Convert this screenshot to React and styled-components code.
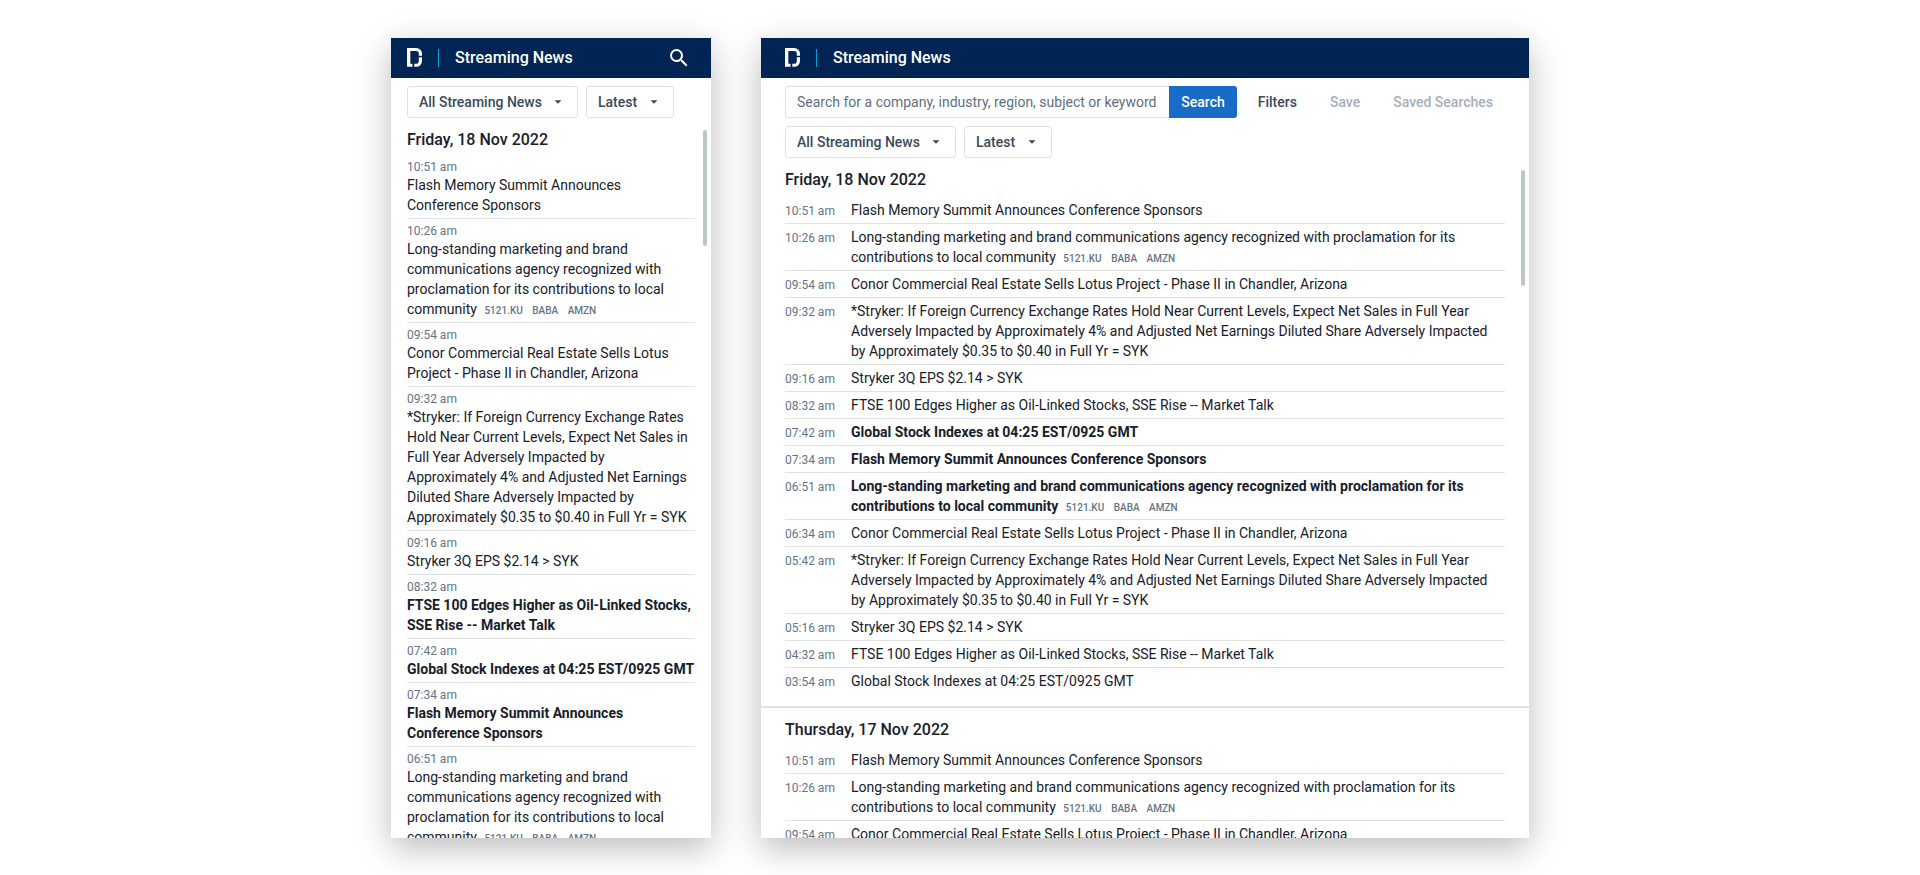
import React from "react";
import styled, { createGlobalStyle, css } from "styled-components";
import { MdSearch } from "react-icons/md";

const TICKERS = ["5121.KU", "BABA", "AMZN"];

const FLASH = "Flash Memory Summit Announces Conference Sponsors";
const AGENCY =
  "Long-standing marketing and brand communications agency recognized with proclamation for its contributions to local community";
const CONOR =
  "Conor Commercial Real Estate Sells Lotus Project - Phase II in Chandler, Arizona";
const STRYKER =
  "*Stryker: If Foreign Currency Exchange Rates Hold Near Current Levels, Expect Net Sales in Full Year Adversely Impacted by Approximately 4% and Adjusted Net Earnings Diluted Share Adversely Impacted by Approximately $0.35 to $0.40 in Full Yr = SYK";
const EPS = "Stryker 3Q EPS $2.14 > SYK";
const FTSE = "FTSE 100 Edges Higher as Oil-Linked Stocks, SSE Rise -- Market Talk";
const GLOBAL = "Global Stock Indexes at 04:25 EST/0925 GMT";

const mobileDays = [
  {
    date: "Friday, 18 Nov 2022",
    items: [
      { time: "10:51 am", title: FLASH },
      { time: "10:26 am", title: AGENCY, tickers: TICKERS },
      { time: "09:54 am", title: CONOR },
      { time: "09:32 am", title: STRYKER },
      { time: "09:16 am", title: EPS },
      { time: "08:32 am", title: FTSE, unread: true },
      { time: "07:42 am", title: GLOBAL, unread: true },
      { time: "07:34 am", title: FLASH, unread: true },
      { time: "06:51 am", title: AGENCY, tickers: TICKERS },
    ],
  },
];

const desktopDays = [
  {
    date: "Friday, 18 Nov 2022",
    items: [
      { time: "10:51 am", title: FLASH },
      { time: "10:26 am", title: AGENCY, tickers: TICKERS },
      { time: "09:54 am", title: CONOR },
      { time: "09:32 am", title: STRYKER },
      { time: "09:16 am", title: EPS },
      { time: "08:32 am", title: FTSE },
      { time: "07:42 am", title: GLOBAL, unread: true },
      { time: "07:34 am", title: FLASH, unread: true },
      { time: "06:51 am", title: AGENCY, tickers: TICKERS, unread: true },
      { time: "06:34 am", title: CONOR },
      { time: "05:42 am", title: STRYKER },
      { time: "05:16 am", title: EPS },
      { time: "04:32 am", title: FTSE },
      { time: "03:54 am", title: GLOBAL },
    ],
  },
  {
    date: "Thursday, 17 Nov 2022",
    items: [
      { time: "10:51 am", title: FLASH },
      { time: "10:26 am", title: AGENCY, tickers: TICKERS },
      { time: "09:54 am", title: CONOR },
    ],
  },
];

function AppHeader({ compact }) {
  return (
    <Header $compact={compact}>
      <Logo viewBox="0 0 15 19" aria-label="Home">
        <path d="M0 0H9.3A5.7 5.7 0 0 1 15 5.7V7.8H11.8V5.8A2.8 2.8 0 0 0 9 3H3.3V15.7H5.5V18.8H0Z" />
        <path d="M15 9.2V13.1A5.7 5.7 0 0 1 9.3 18.8H7.3V15.7H9A2.8 2.8 0 0 0 11.8 12.9V9.2Z" />
      </Logo>
      <HeaderLine />
      <Title>Streaming News</Title>
      {compact && (
        <IconButton type="button" aria-label="Search">
          <MdSearch size={24} />
        </IconButton>
      )}
    </Header>
  );
}

function Dropdown({ label, options }) {
  return (
    <DropdownBox>
      <Select aria-label={label}>
        {options.map((option) => (
          <option key={option}>{option}</option>
        ))}
      </Select>
      <Caret viewBox="0 0 8 4">
        <path d="M0.5 0.2H7.5L4 3.8Z" />
      </Caret>
    </DropdownBox>
  );
}

function Dropdowns() {
  return (
    <Controls $gap={8}>
      <Dropdown label="Source" options={["All Streaming News"]} />
      <Dropdown label="Sort by" options={["Latest"]} />
    </Controls>
  );
}

function Feed({ days, compact }) {
  return (
    <FeedFrame>
      <Scroller>
        {days.map((day) => (
          <Day key={day.date} $compact={compact}>
            <DayTitle $compact={compact}>{day.date}</DayTitle>
            <List>
              {day.items.map((item) => (
                <Item key={item.time} $compact={compact}>
                  <Time $compact={compact}>{item.time}</Time>
                  <Headline $unread={item.unread}>
                    {item.title}
                    {item.tickers &&
                      item.tickers.map((ticker) => (
                        <React.Fragment key={ticker}>
                          {" "}
                          <Ticker>{ticker}</Ticker>
                        </React.Fragment>
                      ))}
                  </Headline>
                </Item>
              ))}
            </List>
          </Day>
        ))}
      </Scroller>
      <Thumb />
    </FeedFrame>
  );
}

export default function App() {
  return (
    <>
      <GlobalStyle />
      <Page>
        <Panel $basis={320}>
          <AppHeader compact />
          <Toolbar $compact>
            <Dropdowns />
          </Toolbar>
          <Feed days={mobileDays} compact />
        </Panel>
        <Panel $basis={768}>
          <AppHeader />
          <Toolbar>
            <Controls $gap={9}>
              <SearchForm onSubmit={(event) => event.preventDefault()}>
                <SearchInput
                  type="text"
                  aria-label="Search news"
                  placeholder="Search for a company, industry, region, subject or keyword"
                />
                <SearchButton type="submit">Search</SearchButton>
              </SearchForm>
              <TextButton type="button">Filters</TextButton>
              <TextButton type="button" disabled>
                Save
              </TextButton>
              <TextButton type="button" disabled>
                Saved Searches
              </TextButton>
            </Controls>
            <Dropdowns />
          </Toolbar>
          <Feed days={desktopDays} />
        </Panel>
      </Page>
    </>
  );
}

const GlobalStyle = createGlobalStyle`
  * {
    box-sizing: border-box;
  }
  body {
    margin: 0;
    background-color: #fff;
    color: #17202a;
    font-family: Roboto, "Liberation Sans", sans-serif;
    font-size: 14px;
    line-height: 20px;
  }
  button, input, select {
    font: inherit;
  }
`;

const gutter = css`
  padding-left: ${(props) => (props.$compact ? 16 : 24)}px;
  padding-right: ${(props) => (props.$compact ? 16 : 24)}px;
`;

const Page = styled.main`
  height: 100vh;
  padding: 0 24px;
  display: flex;
  justify-content: center;
  align-items: center;
  gap: 50px;
`;
const Panel = styled.section`
  flex: 0 1 ${(props) => props.$basis}px;
  min-width: 0;
  height: calc(100vh - 75px);
  display: flex;
  flex-direction: column;
  background-color: #fff;
  box-shadow: 0 10px 32px rgba(0, 0, 0, 0.27);
`;
const Header = styled.header`
  ${gutter}
  flex: none;
  height: 40px;
  display: flex;
  align-items: center;
  gap: 16px;
  background-color: #002554;
  color: #fff;
`;
const Logo = styled.svg`
  width: 15px;
  height: 19px;
  fill: #fff;
`;
const HeaderLine = styled.span`
  width: 1px;
  height: 18px;
  background-color: #00a3d9;
`;
const Title = styled.h1`
  margin: 0;
  font-size: 16px;
  font-weight: 500;
`;
const IconButton = styled.button`
  margin-left: auto;
  margin-right: 4px;
  padding: 0;
  display: flex;
  border: 0;
  background: none;
  color: #fff;
`;
const Toolbar = styled.div`
  ${gutter}
  flex: none;
  padding-top: 8px;
  display: flex;
  flex-direction: column;
  gap: 8px;
`;
const Controls = styled.div`
  display: flex;
  gap: ${(props) => props.$gap}px;
`;
const DropdownBox = styled.div`
  display: grid;
  align-items: center;
`;
const Select = styled.select`
  grid-area: 1 / 1;
  height: 32px;
  padding: 0 35px 0 11px;
  appearance: none;
  border: 1px solid #dfe1e3;
  border-radius: 3px;
  background-color: #fff;
  color: #3b4a5a;
  font-weight: 500;
`;
const Caret = styled.svg`
  grid-area: 1 / 1;
  justify-self: end;
  width: 8px;
  height: 4px;
  margin-right: 16px;
  fill: #3b4a5a;
  pointer-events: none;
`;
const SearchForm = styled.form`
  flex: 1;
  min-width: 0;
  display: flex;
`;
const SearchInput = styled.input`
  flex: 1;
  min-width: 0;
  height: 32px;
  padding: 0 11px;
  border: 1px solid #dfe1e3;
  border-right: 0;
  border-radius: 3px 0 0 3px;
  color: #17202a;
  &::placeholder {
    color: #5f6f80;
    opacity: 1;
  }
`;
const SearchButton = styled.button`
  height: 32px;
  padding: 0 12px;
  border: 0;
  border-radius: 0 3px 3px 0;
  background-color: #186bc7;
  color: #fff;
  font-weight: 500;
`;
const TextButton = styled.button`
  height: 32px;
  padding: 0 12px;
  border: 0;
  background: none;
  color: #3b4a5a;
  font-weight: 500;
  white-space: nowrap;
  &:disabled {
    color: #a5afb9;
  }
`;
const FeedFrame = styled.div`
  position: relative;
  flex: 1;
  min-height: 0;
`;
const Scroller = styled.div`
  height: 100%;
  overflow-y: auto;
  scrollbar-width: none;
`;
const Thumb = styled.span`
  position: absolute;
  top: 12px;
  right: 4px;
  width: 4px;
  height: 116px;
  border-radius: 2px;
  background-color: #bdc6c8;
`;
const Day = styled.section`
  ${gutter}
  padding-top: 12px;
  padding-bottom: 12px;
  & + & {
    border-top: 2px solid #dfe1e3;
  }
`;
const DayTitle = styled.h2`
  margin: 0 0 ${(props) => (props.$compact ? 5 : 7)}px;
  font-size: 16px;
  font-weight: 500;
`;
const List = styled.ul`
  margin: 0;
  padding: 0;
  list-style: none;
`;
const Item = styled.li`
  display: flex;
  flex-direction: ${(props) => (props.$compact ? "column" : "row")};
  align-items: ${(props) => (props.$compact ? "stretch" : "baseline")};
  padding: ${(props) => (props.$compact ? 5 : 3)}px 0 3px;
  & + & {
    border-top: 1px solid #dfe1e3;
  }
`;
const Time = styled.time`
  flex: none;
  width: 66px;
  color: #647485;
  font-size: 12px;
  line-height: 15px;
`;
const Headline = styled.span`
  font-weight: ${(props) => (props.$unread ? 700 : 400)};
`;
const Ticker = styled.span`
  margin-left: 4px;
  color: #647485;
  font-size: 10px;
  font-weight: 500;
  line-height: 12px;
  & + & {
    margin-left: 6px;
  }
`;
